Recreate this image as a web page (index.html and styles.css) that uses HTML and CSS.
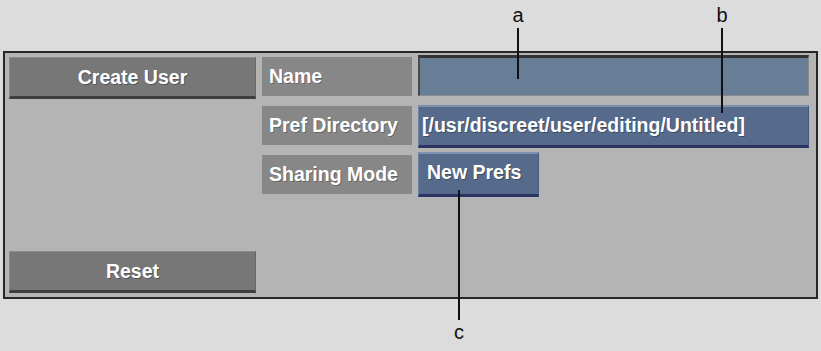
FILE: index.html
```html
<!DOCTYPE html>
<html lang="en">
<head>
    <meta charset="UTF-8">
    <title>Create User</title>
    <link rel="stylesheet" href="styles.css">
</head>
<body>
    <div class="page">
        <div class="panel">
            <div class="side">
                <div class="grey-button">Create User</div>
                <div class="grey-button">Reset</div>
            </div>
            <div class="fields">
                <div class="label">Name</div>
                <div class="name-field"></div>

                <div class="label">Pref Directory</div>
                <div class="blue-button path">[/usr/discreet/user/editing/Untitled]</div>

                <div class="label">Sharing Mode</div>
                <div class="blue-button mode">New Prefs</div>
            </div>
        </div>
    </div>

    <!-- callouts -->
    <div class="callout callout-a">
        <span class="letter">a</span>
        <span class="leader"></span>
    </div>
    <div class="callout callout-b">
        <span class="letter">b</span>
        <span class="leader"></span>
    </div>
    <div class="callout callout-c">
        <span class="leader"></span>
        <span class="letter">c</span>
    </div>
</body>
</html>
```

FILE: styles.css
```css
body {
    margin: 0;
    padding: 0;
    background-color: #dcdcdc;
    font-family: 'Liberation Sans', Arial, sans-serif;
    position: relative;
    width: 821px;
    height: 351px;
    overflow: hidden;
}

.page {
    padding: 51px 3px 0 3px;
}

.panel {
    display: flex;
    gap: 6px;
    height: 248px;
    box-sizing: border-box;
    border: 2px solid #262626;
    padding: 4px 7px 4px 4px;
    background-color: #b4b4b4;
}

.side {
    width: 247px;
    display: flex;
    flex-direction: column;
    justify-content: space-between;
}

.grey-button {
    height: 42px;
    box-sizing: border-box;
    background-color: #777;
    border-top: 1px solid #8c8c8c;
    border-left: 1px solid #8a8a8a;
    border-right: 1px solid #666;
    border-bottom: 3px solid #3e3e3e;
    color: #fff;
    font-weight: bold;
    font-size: 19.5px;
    text-align: center;
    line-height: 38px;
    text-shadow: 1px 1px 0 rgba(0,0,0,0.3);
}

.fields {
    display: grid;
    grid-template-columns: 150px 391px;
    grid-auto-rows: 39px;
    column-gap: 6px;
    row-gap: 10px;
    align-content: start;
}

.label {
    background-color: #878787;
    color: #fff;
    font-weight: bold;
    font-size: 19.5px;
    line-height: 39px;
    padding-left: 7px;
    text-shadow: 1px 1px 0 rgba(0,0,0,0.25);
}

.name-field {
    box-sizing: border-box;
    margin-top: -2px;
    height: 41px;
    background-color: #687e97;
    border-top: 3px solid #333;
    border-left: 2px solid #4a4a4a;
    border-right: 1px solid #8a8a8a;
    border-bottom: 1px solid #8a8a8a;
}

.blue-button {
    box-sizing: border-box;
    margin-top: -1px;
    height: 43px;
    background-color: #566b8b;
    border-top: 2px solid #7d91ad;
    border-left: 1px solid #6d81a0;
    border-right: 1px solid #45577a;
    border-bottom: 3px solid #2b3462;
    color: #fff;
    font-weight: bold;
    font-size: 19.5px;
    line-height: 37px;
    white-space: nowrap;
    text-shadow: 1px 1px 0 rgba(0,0,0,0.3);
}

.path {
    padding-left: 3px;
}

.mode {
    width: 121px;
    padding-left: 8px;
    margin-top: -3px;
    height: 45px;
}

/* callout letters and leader lines */
.callout {
    position: absolute;
    display: flex;
    flex-direction: column;
    align-items: center;
    width: 20px;
}

.letter {
    font-family: 'Liberation Sans', Arial, sans-serif;
    font-size: 20px;
    line-height: 20px;
    color: #111;
}

.leader {
    width: 2px;
    background-color: #111;
}

.callout-a {
    left: 508px;
    top: 5px;
}

.callout-a .leader {
    margin-top: 3px;
    height: 51px;
}

.callout-b {
    left: 712px;
    top: 5px;
}

.callout-b .leader {
    margin-top: 3px;
    height: 85px;
}

.callout-c {
    left: 449px;
    top: 190px;
}

.callout-c .leader {
    height: 130px;
    margin-bottom: 2px;
}
```
